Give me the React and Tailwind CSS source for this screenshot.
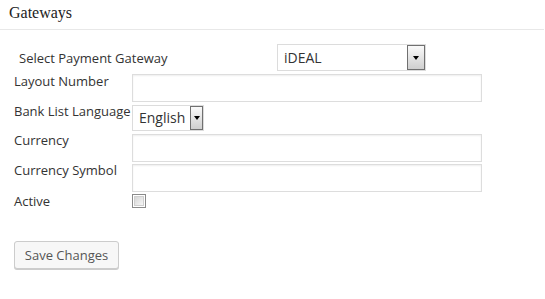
import React from "react";

function SelectBox({ width, height, text, btnWidth }) {
  return (
    <div
      className="flex items-stretch border border-[#dcdcdc] bg-white shrink-0"
      style={{ width, height }}
    >
      <div className="flex-1 pl-[6px] flex items-center text-[14px] text-[#333] leading-none">
        {text}
      </div>
      <div
        className="border border-[#707070] bg-gradient-to-b from-[#fafafa] to-[#cfcfcf] flex items-center justify-center"
        style={{ width: btnWidth }}
      >
        <div className="w-0 h-0 border-l-[3px] border-r-[3px] border-t-[4px] border-l-transparent border-r-transparent border-t-black" />
      </div>
    </div>
  );
}

function TextInput() {
  return (
    <div className="w-[350px] h-[28px] border border-[#dddddd] bg-white shadow-[inset_0_1px_2px_rgba(0,0,0,0.07)] shrink-0" />
  );
}

export default function App() {
  return (
    <div className="w-[545px] h-[299px] bg-white text-[#333] font-['Open_Sans',sans-serif] text-[13px]">
      <div className="h-[30px] w-[544px] border-b border-[#e8e8e8] pl-[9px] pt-[3px]">
        <div className="font-['Liberation_Serif',serif] text-[16px] leading-[20px] text-[#222]">
          Gateways
        </div>
      </div>

      <div className="flex items-center pl-[19px] mt-[14px]">
        <div className="w-[258px] leading-[18px]">Select Payment Gateway</div>
        <SelectBox width={149} height={27} text="iDEAL" btnWidth={18} />
      </div>

      <div className="flex items-start pl-[14px] mt-[3px]">
        <div className="w-[118px] leading-[18px] -mt-[2px]">Layout Number</div>
        <TextInput />
      </div>

      <div className="flex items-start pl-[14px] mt-[3px]">
        <div className="w-[118px] leading-[18px] -mt-[3px] whitespace-nowrap">Bank List Language</div>
        <SelectBox width={72} height={26} text="English" btnWidth={13} />
      </div>

      <div className="flex items-start pl-[14px] mt-[3px]">
        <div className="w-[118px] leading-[18px] -mt-[3px]">Currency</div>
        <TextInput />
      </div>

      <div className="flex items-start pl-[14px] mt-[2px]">
        <div className="w-[118px] leading-[18px] -mt-[3px]">Currency Symbol</div>
        <TextInput />
      </div>

      <div className="flex items-start pl-[14px] mt-[2px]">
        <div className="w-[118px] leading-[18px] -mt-[2px]">Active</div>
        <div className="w-[14px] h-[14px] border border-[#8a8a8a] bg-white p-[1px] shrink-0">
          <div className="w-full h-full border border-[#cfcfcf] bg-gradient-to-br from-[#d6d6d6] to-[#f6f6f6]" />
        </div>
      </div>

      <div className="pl-[14px] mt-[31px]">
        <button className="w-[105px] h-[28px] border border-[#cccccc] rounded-[3px] bg-[#f7f7f7] shadow-[0_1px_0_#cccccc] text-[13px] text-[#555] leading-none">
          Save Changes
        </button>
      </div>
    </div>
  );
}
